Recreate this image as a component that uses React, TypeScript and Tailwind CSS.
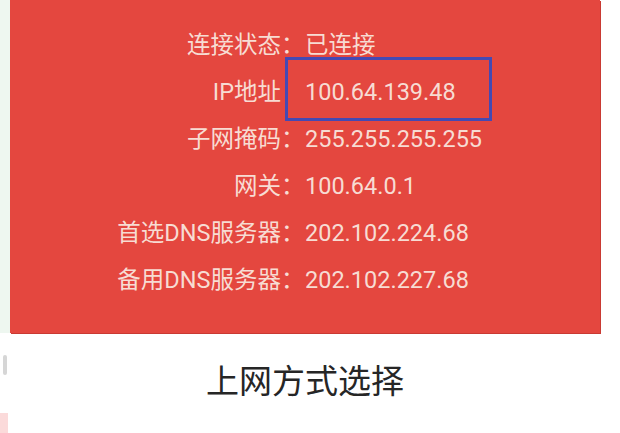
const rows: { label: string; colon: boolean; value: string }[] = [
  { label: '连接状态', colon: true, value: '已连接' },
  { label: 'IP地址', colon: false, value: '100.64.139.48' },
  { label: '子网掩码', colon: true, value: '255.255.255.255' },
  { label: '网关', colon: true, value: '100.64.0.1' },
  { label: '首选DNS服务器', colon: true, value: '202.102.224.68' },
  { label: '备用DNS服务器', colon: true, value: '202.102.227.68' },
]

export default function App() {
  return (
    <div
      className="flex h-[433px] w-[620px] overflow-hidden bg-white"
      style={{ fontFamily: 'Roboto, "Noto Sans CJK SC", sans-serif' }}
    >
      {/* left edge of the previous page */}
      <div className="flex w-[10px] flex-col bg-[#eef7f0]">
        <div className="h-[333px]" />
        <div className="flex-1 bg-white">
          <div className="ml-[3px] mt-[22px] h-[20px] w-[4px] rounded-sm bg-[#d6d6d6]" />
          <div className="mt-[38px] h-[20px] w-[8px] bg-[#fbdada]" />
        </div>
      </div>

      <div className="flex w-[590px] flex-col">
        <div className="h-[333px] bg-[#e4473f] pt-[22px] shadow-[1px_1px_0_#c93a33]">
          <div className="grid grid-cols-[271px_24px_1fr] text-[23.5px] leading-[47px] text-[#f7dcd3]">
            {rows.map((r) => (
              <div key={r.label} className="contents">
                <div className="text-right">{r.label}</div>
                <div>{r.colon ? '：' : ''}</div>
                <div className="relative">
                  {r.value}
                  {!r.colon && (
                    <div className="absolute left-[-20px] top-[-12px] h-[64px] w-[207px] border-[3px] border-[#4549b3]" />
                  )}
                </div>
              </div>
            ))}
          </div>
        </div>
        <div className="flex flex-1 items-center justify-center pb-[2px] text-[33px] text-[#262626]">
          上网方式选择
        </div>
      </div>
    </div>
  )
}
